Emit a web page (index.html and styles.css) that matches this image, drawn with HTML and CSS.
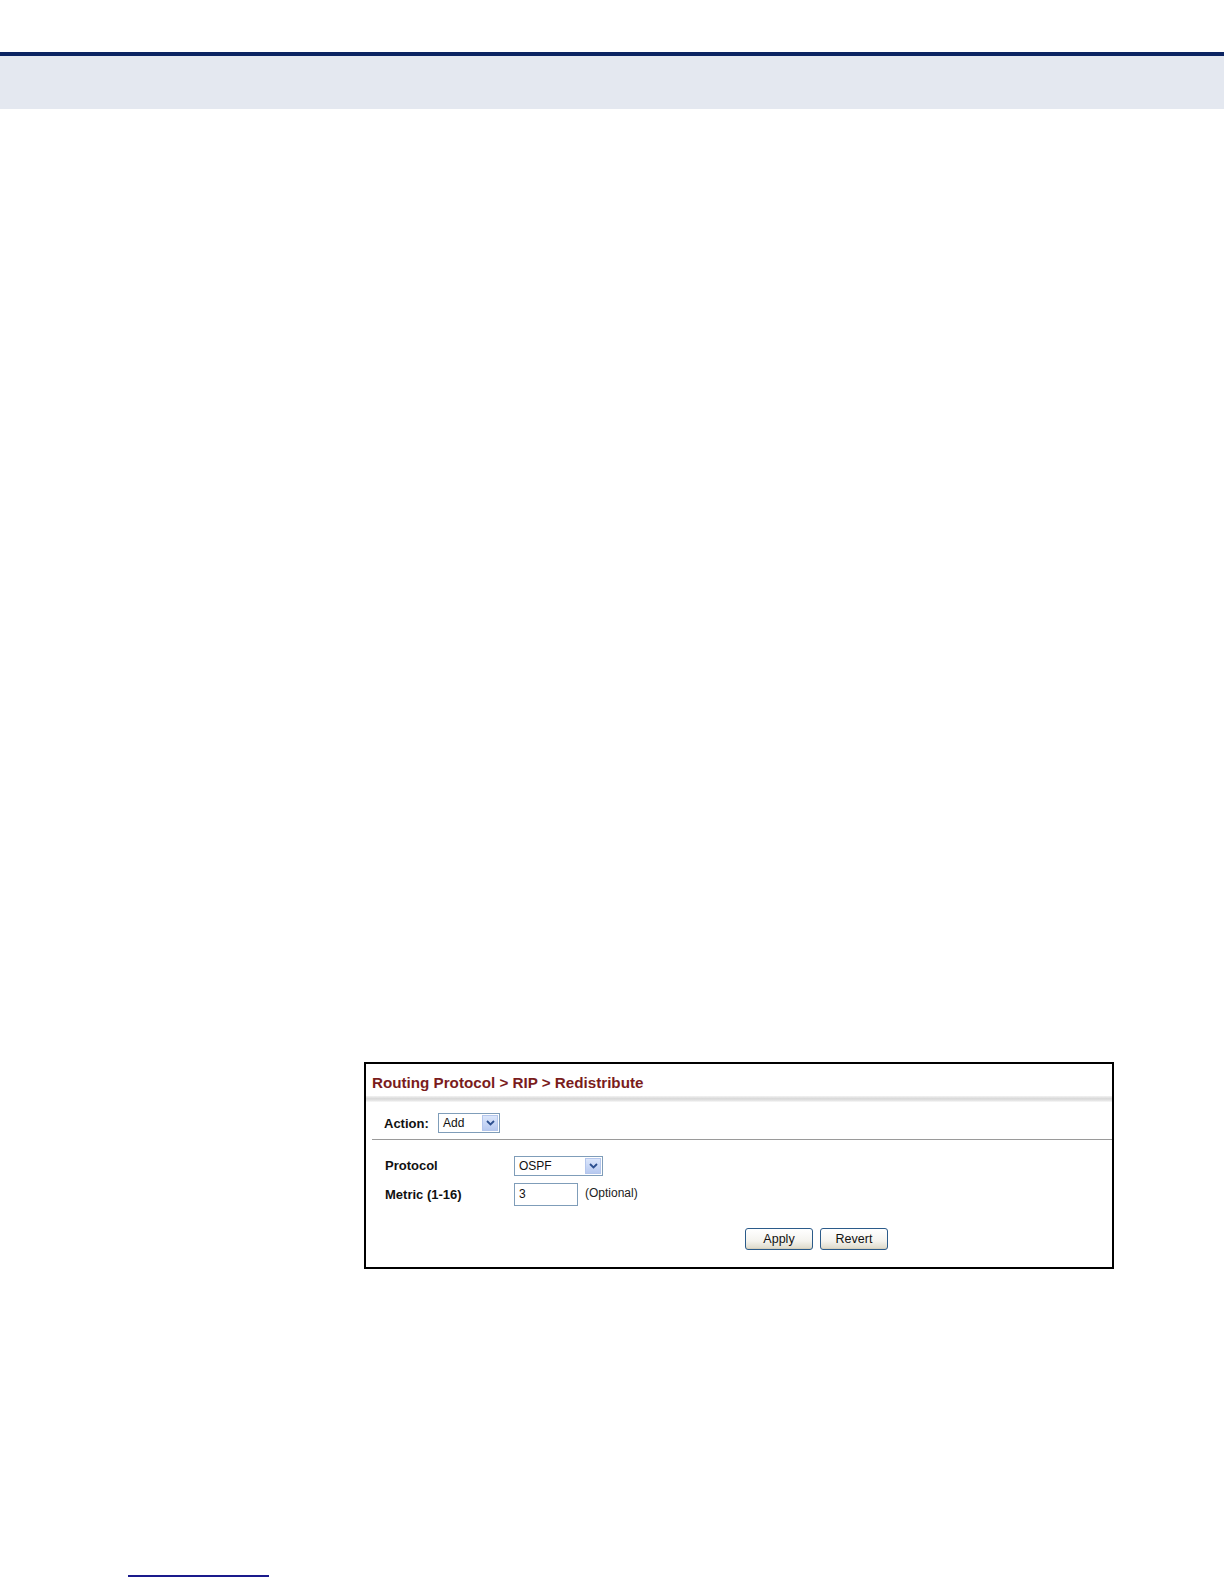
FILE: index.html
```html
<!DOCTYPE html>
<html>
<head>
<meta charset="utf-8">
<link rel="stylesheet" href="styles.css">
</head>
<body>
<div class="topbar"></div>
<div class="band"></div>
<div class="figure">
  <div class="title">Routing Protocol &gt; RIP &gt; Redistribute</div>
  <div class="shade"></div>
  <div class="action-row">
    <span class="lbl">Action:</span>
    <div class="select sel-add"><span class="val">Add</span><span class="drop"><svg width="9" height="6" viewBox="0 0 9 6"><path d="M1 1 L4.5 4.5 L8 1" fill="none" stroke="#2c4f8f" stroke-width="1.8"/></svg></span></div>
  </div>
  <div class="sep"></div>
  <div class="form">
    <div class="row">
      <span class="flbl">Protocol</span>
      <div class="select sel-proto"><span class="val">OSPF</span><span class="drop"><svg width="9" height="6" viewBox="0 0 9 6"><path d="M1 1 L4.5 4.5 L8 1" fill="none" stroke="#2c4f8f" stroke-width="1.8"/></svg></span></div>
    </div>
    <div class="row">
      <span class="flbl">Metric (1-16)</span>
      <div class="input">3</div>
      <span class="opt">(Optional)</span>
    </div>
    <div class="buttons">
      <span class="btn">Apply</span>
      <span class="btn">Revert</span>
    </div>
  </div>
</div>
<div class="footline"></div>
</body>
</html>
```

FILE: styles.css
```css
html, body {
  margin: 0;
  padding: 0;
  background: #ffffff;
  font-family: "Liberation Sans", Arial, sans-serif;
}
.topbar {
  margin-top: 52px;
  height: 4px;
  background: #0b2462;
}
.band {
  height: 53px;
  background: #e4e8f0;
}
.figure {
  margin-top: 953px;
  margin-left: 364px;
  width: 746px;
  height: 203px;
  border: 2px solid #000;
  box-sizing: content-box;
}
.title {
  height: 32px;
  line-height: 38px;
  padding-left: 6px;
  font-size: 15.2px;
  font-weight: bold;
  color: #7a1c1c;
}
.shade {
  height: 6px;
  background: linear-gradient(to bottom, #f2f2f2 0%, #d8d8d8 45%, #e8e8e8 80%, #fafafa 100%);
}
.action-row {
  display: flex;
  align-items: center;
  height: 32px;
  padding-top: 5px;
  padding-left: 18px;
}
.lbl {
  font-size: 13px;
  font-weight: bold;
  color: #111;
  width: 54px;
}
.select {
  display: flex;
  align-items: center;
  height: 18px;
  border: 1px solid #7f9db9;
  background: #fff;
  box-sizing: content-box;
}
.select .val {
  flex: 1;
  font-size: 12px;
  color: #111;
  padding-left: 4px;
}
.select .drop {
  width: 16px;
  height: 16px;
  margin-right: 1px;
  display: flex;
  align-items: center;
  justify-content: center;
  background: linear-gradient(to bottom, #dbe6fb, #b7c9f0);
  border: 1px solid #b4c6ec;
  box-sizing: border-box;
}
.sel-add { width: 60px; }
.sel-proto { width: 87px; }
.sep {
  height: 1px;
  background: #9a9a9a;
  margin-left: 6px;
}
.form {
  padding-left: 19px;
  padding-top: 11px;
}
.row {
  display: flex;
  align-items: center;
  height: 29px;
}
.flbl {
  width: 129px;
  font-size: 13px;
  font-weight: bold;
  color: #111;
}
.input {
  width: 58px;
  height: 21px;
  line-height: 21px;
  border: 1px solid #7f9db9;
  padding-left: 4px;
  font-size: 12px;
  color: #111;
  box-sizing: content-box;
}
.opt {
  margin-left: 7px;
  font-size: 12px;
  color: #222;
  margin-top: -3px;
}
.buttons {
  display: flex;
  gap: 7px;
  margin-top: 19px;
  padding-left: 360px;
}
.btn {
  width: 66px;
  height: 20px;
  line-height: 20px;
  text-align: center;
  font-size: 12.5px;
  color: #111;
  border: 1px solid #2b5b8a;
  border-radius: 3px;
  background: linear-gradient(to bottom, #ffffff 0%, #f4f3ee 60%, #dcd8c8 100%);
  box-shadow: inset 0 -1px 0 #d6d0bd;
}
.footline {
  margin-top: 306px;
  margin-left: 128px;
  width: 141px;
  height: 2px;
  background: #1a1a8c;
}
```
